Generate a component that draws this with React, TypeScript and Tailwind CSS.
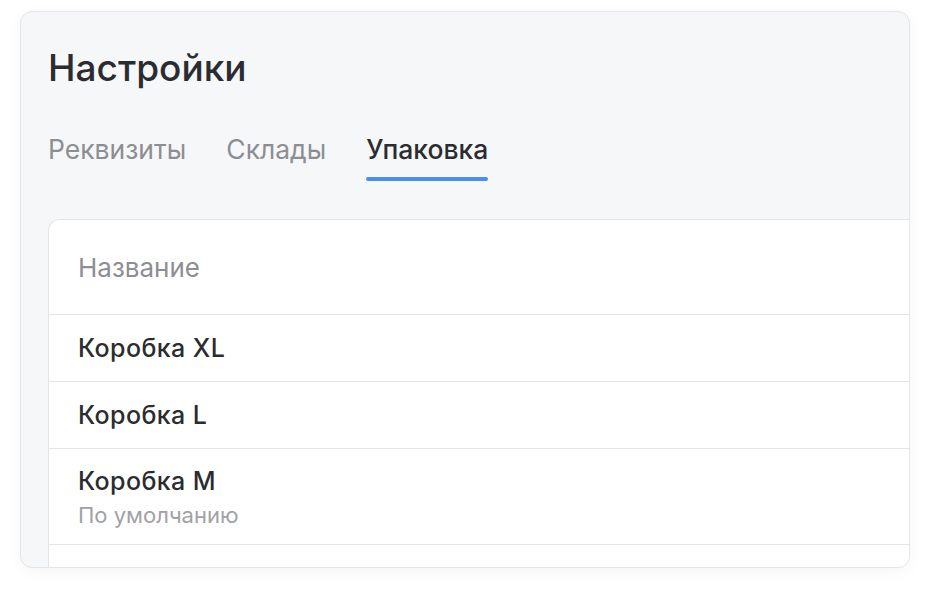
const rows = [
  { name: 'Коробка XL' },
  { name: 'Коробка L' },
  { name: 'Коробка M', note: 'По умолчанию' },
];

const tabs = ['Реквизиты', 'Склады', 'Упаковка'];

export default function App() {
  return (
    <div className="h-[597px] w-[930px] bg-white pl-5 pt-[11px] font-['Inter',sans-serif]">
      <div className="flex h-[557px] w-[890px] flex-col overflow-hidden rounded-xl border border-[#e4e5ea] bg-[#f6f7f9] shadow-[0_4px_16px_rgba(0,0,0,0.04)]">
        <h1 className="pl-[27px] pt-[34px] text-[37px] font-medium leading-[44px] text-[#2b2c31]">Настройки</h1>
        <div className="mt-[42px] flex gap-10 pl-[27px]">
          {tabs.map((t, i) => (
            <div key={t} className="flex flex-col">
              <span
                className={
                  i === 2
                    ? 'text-[26.5px] font-medium leading-[34px] text-[#2b2c31]'
                    : 'text-[26.5px] leading-[34px] text-[#8d8e93]'
                }
              >
                {t}
              </span>
              <div className={i === 2 ? 'mt-[11px] h-1 rounded-full bg-[#4a8fee]' : 'mt-[11px] h-1'} />
            </div>
          ))}
        </div>
        <div className="ml-[27px] mt-[38px] w-[900px] rounded-tl-xl border-l border-t border-[#e4e5ea] bg-white">
          <div className="flex h-[95px] items-center border-b border-[#e4e5ea] pl-[29px] text-[26px] text-[#8d8e93]">
            Название
          </div>
          {rows.map((r) => (
            <div
              key={r.name}
              className={`flex flex-col justify-center border-b border-[#e4e5ea] pl-[29px] ${r.note ? 'h-[96px]' : 'h-[67px]'}`}
            >
              <span className="text-[25px] font-medium leading-8 tracking-[0.4px] text-[#2b2c31]">{r.name}</span>
              {r.note && <span className="mt-[4px] text-[22px] leading-7 text-[#a0a1a6]">{r.note}</span>}
            </div>
          ))}
          <div className="h-10" />
        </div>
      </div>
    </div>
  );
}
